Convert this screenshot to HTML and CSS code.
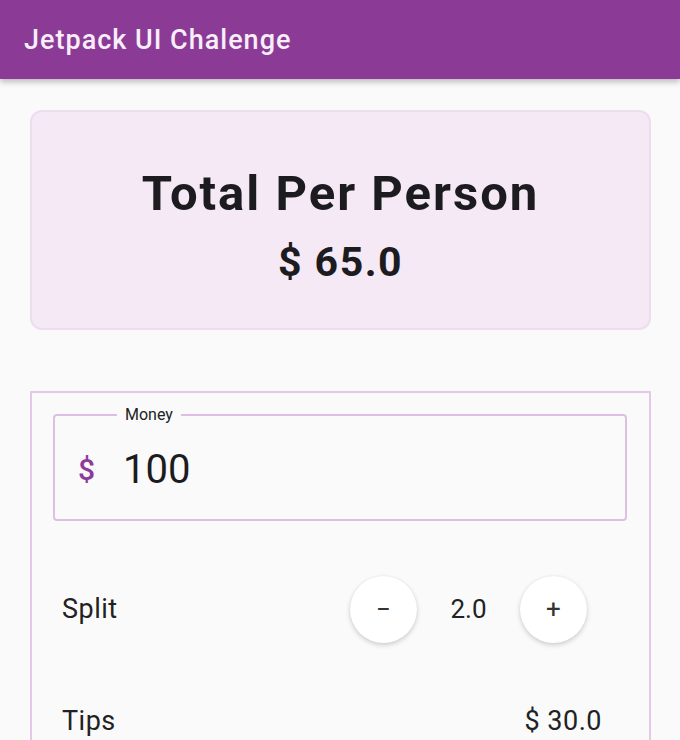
FILE: index.html
```html
<!DOCTYPE html>
<html>
<head>
<meta charset="utf-8">
<link rel="stylesheet" href="styles.css">
</head>
<body>
<header class="appbar">
  <h1 class="appbar-title">Jetpack UI Chalenge</h1>
</header>
<main class="content">
  <section class="total-card">
    <div class="total-label">Total Per Person</div>
    <div class="total-value">$ 65.0</div>
  </section>
  <section class="bill-card">
    <fieldset class="money-field">
      <legend class="money-legend">Money</legend>
      <div class="money-input">
        <span class="money-icon">$</span>
        <span class="money-value">100</span>
      </div>
    </fieldset>
    <div class="row split-row">
      <span class="row-label">Split</span>
      <div class="stepper">
        <button class="round-btn" type="button">&minus;</button>
        <span class="stepper-value">2.0</span>
        <button class="round-btn" type="button">+</button>
      </div>
    </div>
    <div class="row tips-row">
      <span class="row-label">Tips</span>
      <span class="tips-value">$ 30.0</span>
    </div>
  </section>
</main>
</body>
</html>
```

FILE: styles.css
```css
* { box-sizing: border-box; }
html, body { margin: 0; padding: 0; }
body {
  background: #fafafa;
  font-family: Roboto, "Noto Sans", "Liberation Sans", sans-serif;
  color: #1f1f1f;
  width: 680px;
  height: 740px;
  overflow: hidden;
}
.appbar {
  height: 79px;
  background: #8b3a96;
  display: flex;
  align-items: center;
  padding-left: 24px;
  box-shadow: 0 3px 6px rgba(0,0,0,0.25);
  position: relative;
  z-index: 1;
}
.appbar-title {
  margin: 0;
  font-size: 27px;
  font-weight: 500;
  color: #f8eef9;
  letter-spacing: 1px;
}
.content {
  padding: 31px 29px 0 30px;
}
.total-card {
  height: 220px;
  background: #f4e9f5;
  border: 2px solid #eedcf0;
  border-radius: 12px;
  display: flex;
  flex-direction: column;
  align-items: center;
  justify-content: center;
  gap: 20px;
  padding-top: 12px;
}
.total-label {
  font-size: 49px;
  font-weight: 700;
  color: #1c1b1f;
  line-height: 1.1;
  letter-spacing: 2px;
}
.total-value {
  font-size: 41px;
  font-weight: 700;
  color: #1c1b1f;
  line-height: 1.1;
  letter-spacing: 1.5px;
}
.bill-card {
  margin-top: 61px;
  border: 2px solid #e3c8e8;
  padding: 12px 22px 0 21px;
  height: 400px;
}
.money-field {
  margin: 0;
  border: 2px solid #dcbfe2;
  border-radius: 4px;
  padding: 0 0 0 23px;
  height: 116px;
}
.money-legend {
  margin-left: 39px;
  padding: 0 8px;
  font-size: 16px;
  color: #222;
  line-height: 20px;
}
.money-input {
  display: flex;
  align-items: center;
  height: 86px;
  padding-top: 2px;
}
.money-icon {
  color: #8e3a9a;
  font-size: 30px;
  font-weight: 500;
  width: 45px;
}
.money-value {
  font-size: 40px;
  color: #1c1b1f;
}
.row {
  display: flex;
  align-items: center;
  justify-content: space-between;
  padding-left: 9px;
}
.row-label {
  font-size: 27px;
  color: #222;
  letter-spacing: 0.5px;
}
.split-row {
  margin-top: 54px;
  height: 68px;
  padding-right: 40px;
}
.stepper {
  display: flex;
  align-items: center;
}
.round-btn {
  width: 67px;
  height: 67px;
  border-radius: 50%;
  border: none;
  background: #ffffff;
  box-shadow: 0 2px 5px rgba(0,0,0,0.18), 0 0 2px rgba(0,0,0,0.06);
  font-family: Roboto, "Noto Sans", sans-serif;
  font-size: 26px;
  color: #333;
  padding: 0;
  display: flex;
  align-items: center;
  justify-content: center;
}
.stepper-value {
  width: 103px;
  text-align: center;
  font-size: 26px;
  color: #222;
}
.tips-row {
  margin-top: 44px;
  height: 68px;
  padding-right: 25px;
}
.tips-value {
  font-size: 27px;
  color: #222;
  letter-spacing: 0.5px;
}
```
